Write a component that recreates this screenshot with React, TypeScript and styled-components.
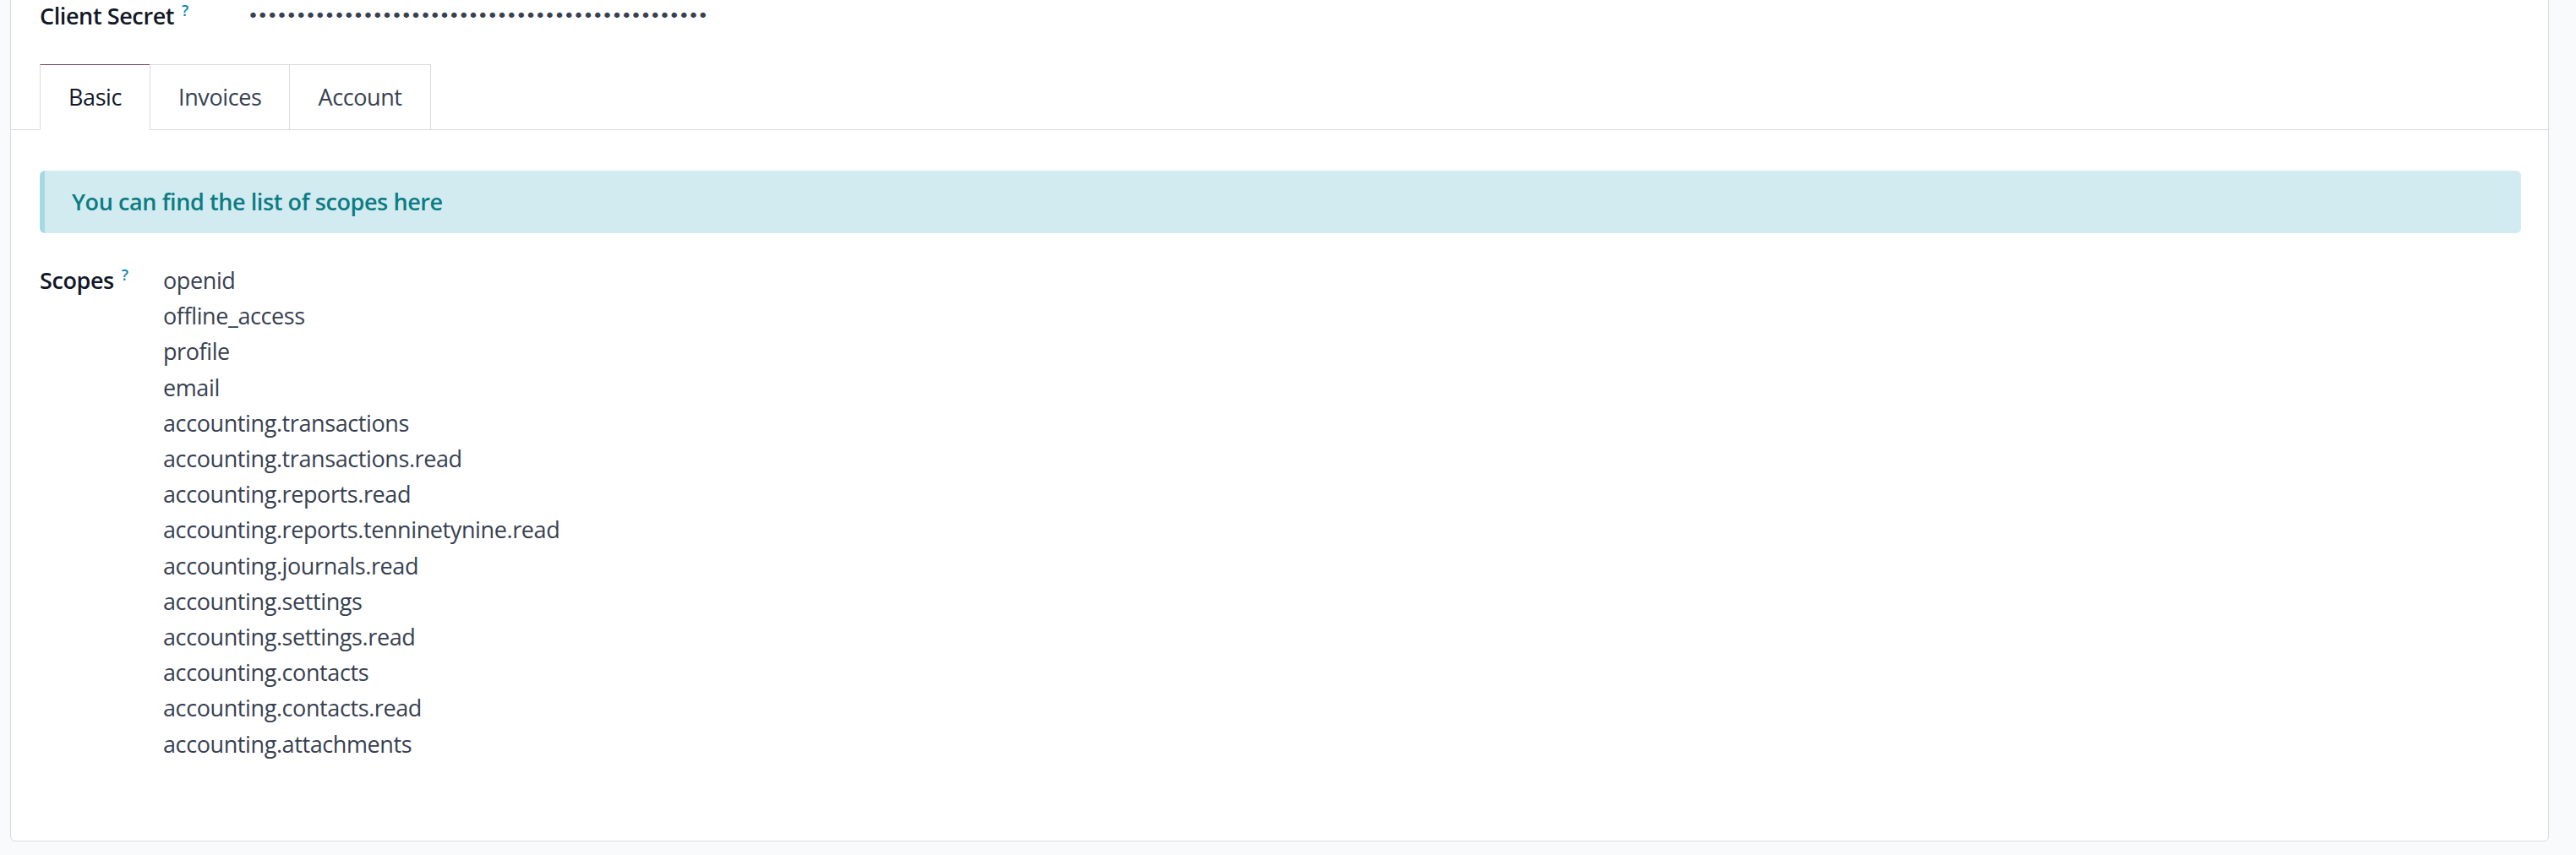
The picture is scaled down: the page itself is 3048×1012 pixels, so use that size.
import React from "react";
import styled, { createGlobalStyle } from "styled-components";

const Global = createGlobalStyle`
  html, body {
    margin: 0;
    padding: 0;
    background: #f9fafb;
  }
  body {
    font-family: "Open Sans", "Noto Sans", "Liberation Sans", sans-serif;
    font-size: 27px;
    line-height: 42px;
    letter-spacing: -0.4px;
    color: #374151;
    overflow: hidden;
  }
`;

const Page = styled.div`
  width: 3048px;
  height: 1012px;
  overflow: hidden;
`;

const Card = styled.div`
  margin: -20px 32px 0 12px;
  padding: 17px 32px 93px 34px;
  background: #ffffff;
  border: 1px solid #d8dadd;
  border-radius: 6px;
`;

const FieldRow = styled.div<{ $labelWidth: number; $top?: number }>`
  display: grid;
  grid-template-columns: ${(p) => p.$labelWidth}px 1fr;
  margin-top: ${(p) => p.$top ?? 0}px;
  align-items: start;
`;

const Label = styled.div`
  font-weight: 600;
  color: #111827;
  white-space: nowrap;
`;

const Help = styled.sup`
  display: inline-block;
  vertical-align: top;
  font-size: 18px;
  line-height: 18px;
  padding-top: 5px;
  margin-left: 9px;
  font-weight: 600;
  letter-spacing: 0;
  color: #0a8bb2;
`;

const SecretValue = styled.div`
  font-family: "DejaVu Sans", sans-serif;
  font-size: 22px;
  letter-spacing: -1.65px;
  color: #374151;
  white-space: nowrap;
  line-height: 42px;
`;

const TabNav = styled.div`
  display: flex;
  margin: 36px -32px 0 -34px;
  padding-left: 34px;
  border-bottom: 1px solid #d8dadd;
`;

const Tab = styled.div<{ $active?: boolean }>`
  padding: 17px 33px;
  margin-bottom: -1px;
  margin-left: ${(p) => (p.$active ? 0 : -1)}px;
  border: 1px solid #d8dadd;
  border-top-color: ${(p) => (p.$active ? "#714b67" : "#d8dadd")};
  border-bottom-color: ${(p) => (p.$active ? "#ffffff" : "#d8dadd")};
  background: #ffffff;
  color: ${(p) => (p.$active ? "#111827" : "#374151")};
  white-space: nowrap;
`;

const TabPane = styled.div`
  padding-top: 48px;
`;

const Alert = styled.div`
  padding: 16px 32px;
  background: #d2ebf0;
  border-left: 6px solid #a5dae2;
  border-radius: 6px;
  color: #0b7c84;
  font-weight: 600;
`;

const ScopeList = styled.ul`
  list-style: none;
  margin: 0;
  padding: 0;
`;

const ScopeItem = styled.li`
  white-space: nowrap;
  line-height: 42.2px;
`;

const scopes = [
  "openid",
  "offline_access",
  "profile",
  "email",
  "accounting.transactions",
  "accounting.transactions.read",
  "accounting.reports.read",
  "accounting.reports.tenninetynine.read",
  "accounting.journals.read",
  "accounting.settings",
  "accounting.settings.read",
  "accounting.contacts",
  "accounting.contacts.read",
  "accounting.attachments",
];

export default function App() {
  return (
    <Page>
      <Global />
      <Card>
        <FieldRow $labelWidth={246}>
          <Label>
            Client Secret<Help>?</Help>
          </Label>
          <SecretValue>{"•".repeat(48)}</SecretValue>
        </FieldRow>
        <TabNav>
          <Tab $active>Basic</Tab>
          <Tab>Invoices</Tab>
          <Tab>Account</Tab>
        </TabNav>
        <TabPane>
          <Alert>You can find the list of scopes here</Alert>
          <FieldRow $labelWidth={146} $top={35}>
            <Label>
              Scopes<Help>?</Help>
            </Label>
            <ScopeList>
              {scopes.map((s) => (
                <ScopeItem key={s}>{s}</ScopeItem>
              ))}
            </ScopeList>
          </FieldRow>
        </TabPane>
      </Card>
    </Page>
  );
}
